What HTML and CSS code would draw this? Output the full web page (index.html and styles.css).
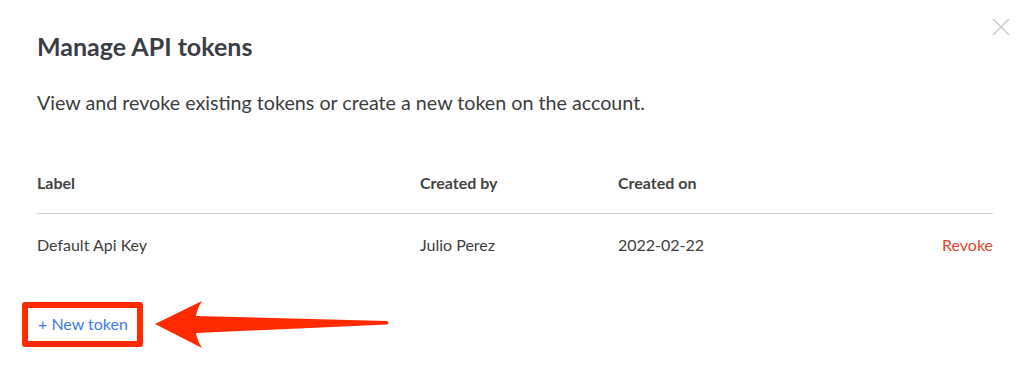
FILE: index.html
```html
<!DOCTYPE html>
<html lang="en">
<head>
    <meta charset="UTF-8">
    <meta name="viewport" content="width=device-width, initial-scale=1.0">
    <title>Manage API tokens</title>
    <link rel="stylesheet" href="styles.css">
</head>
<body>
    <div class="modal">
        <div class="close">
            <svg width="18" height="18" viewBox="0 0 18 18">
                <path d="M1 1 L17 17 M17 1 L1 17" stroke="#c9c9c9" stroke-width="1.4" fill="none"/>
            </svg>
        </div>
        <h2 class="title">Manage API tokens</h2>
        <p class="desc">View and revoke existing tokens or create a new token on the account.</p>
        <div class="tokens">
            <div class="row head">
                <div>Label</div>
                <div>Created by</div>
                <div>Created on</div>
                <div></div>
            </div>
            <div class="row">
                <div>Default Api Key</div>
                <div>Julio Perez</div>
                <div>2022-02-22</div>
                <div><a class="revoke" href="#">Revoke</a></div>
            </div>
        </div>
        <div class="footer">
            <a class="new-token" href="#">+ New token</a>
            <span class="mark"></span>
            <svg class="arrow" width="236" height="50" viewBox="0 0 236 50">
                <path d="M0 24 L47 1 Q42 9 41 16 L232 21 Q235 22.5 232 24.5 L41 33 Q42 40 47 48 Z" fill="#ff2a00"/>
            </svg>
        </div>
    </div>
</body>
</html>
```

FILE: styles.css
```css
body{
    margin: 0px;
    padding: 0px;
    background-color: #ffffff;
    font-family: Lato, "Noto Sans", sans-serif;
}
.modal{
    position: relative;
    padding: 31px 35px 0px 37px;
    height: 340px;
}
.close{
    position: absolute;
    top: 18px;
    right: 18px;
}
.title{
    margin: 0px;
    font-size: 25px;
    line-height: 30px;
    font-weight: 700;
    color: #3b3e45;
}
.desc{
    margin: 30px 0px 0px;
    font-size: 19.7px;
    line-height: 24px;
    color: #3c3d40;
}
.tokens{
    margin-top: 58px;
    font-size: 16px;
    line-height: 20px;
    color: #3e3e3e;
}
.row{
    display: grid;
    grid-template-columns: 383px 198px 1fr auto;
}
.row.head{
    font-weight: 700;
    color: #444444;
    padding-bottom: 20px;
    border-bottom: solid 1px #d4d4d4;
}
.row:not(.head){
    padding-top: 21px;
}
.revoke{
    color: #e0452f;
    text-decoration: none;
}
.footer{
    position: relative;
    margin-top: 59px;
    font-size: 16px;
    line-height: 20px;
}
.new-token{
    color: #3f7be0;
    text-decoration: none;
    margin-left: 1px;
}
.mark{
    position: absolute;
    left: -15px;
    top: -12px;
    width: 109px;
    height: 33px;
    border: solid 6.5px #ff2a00;
    border-radius: 3px;
}
.arrow{
    position: absolute;
    left: 118px;
    top: -14px;
}
```
